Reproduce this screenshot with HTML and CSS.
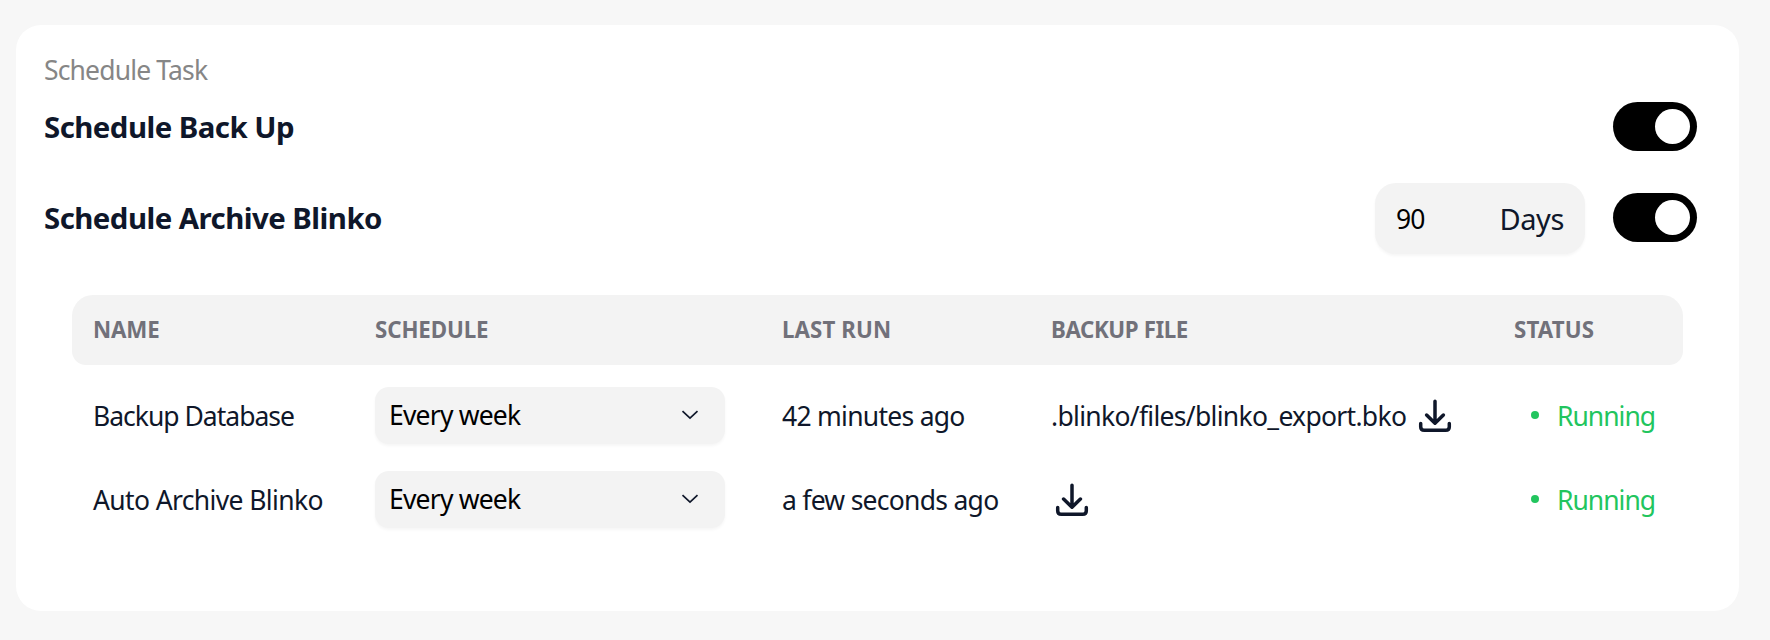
FILE: index.html
```html
<!DOCTYPE html>
<html lang="en">
<head>
<meta charset="utf-8">
<title>Schedule Task</title>
<link rel="stylesheet" href="styles.css">
</head>
<body>
<svg class="defs" width="0" height="0" aria-hidden="true">
  <symbol id="download" viewBox="0 0 42 42">
    <path d="M21 6.300v21.500M12.600 20l8.400 8.200L29.400 20M6.700 28.500v3.200q0 3.600 3.600 3.600h21.400q3.600 0 3.600-3.600v-3.200" fill="none" stroke="currentColor" stroke-width="3.500" stroke-linecap="round" stroke-linejoin="round"/>
  </symbol>
  <symbol id="chevron" viewBox="0 0 18 10">
    <path d="M1.500 1.200l7.500 7 7.500-7" fill="none" stroke="currentColor" stroke-width="1.700"/>
  </symbol>
</svg>
<main class="card">
  <p class="caption">Schedule Task</p>
  <div class="setting setting-backup">
    <h2 class="setting-title">Schedule Back Up</h2>
    <button class="switch" role="switch" aria-checked="true" aria-label="Schedule Back Up"><span class="knob"></span></button>
  </div>
  <div class="setting setting-archive">
    <h2 class="setting-title">Schedule Archive Blinko</h2>
    <div class="controls">
      <div class="days"><span class="days-value">90</span><span class="days-unit">Days</span></div>
      <button class="switch" role="switch" aria-checked="true" aria-label="Schedule Archive Blinko"><span class="knob"></span></button>
    </div>
  </div>
  <section class="table">
    <div class="row head">
      <span>NAME</span><span>SCHEDULE</span><span class="head-last">LAST RUN</span><span class="head-file">BACKUP FILE</span><span class="head-status">STATUS</span>
    </div>
    <div class="row">
      <span class="name-db">Backup Database</span>
      <div class="select"><span>Every week</span><svg class="chevron"><use href="#chevron"/></svg></div>
      <span class="last-run">42 minutes ago</span>
      <div class="file"><span>.blinko/files/blinko_export.bko</span><svg class="download"><use href="#download"/></svg></div>
      <div class="status"><i class="dot"></i><span>Running</span></div>
    </div>
    <div class="row">
      <span class="name-archive">Auto Archive Blinko</span>
      <div class="select"><span>Every week</span><svg class="chevron"><use href="#chevron"/></svg></div>
      <span class="last-run">a few seconds ago</span>
      <div class="file"><svg class="download"><use href="#download"/></svg></div>
      <div class="status"><i class="dot"></i><span>Running</span></div>
    </div>
  </section>
</main>
</body>
</html>
```
FILE: styles.css
```css
* { box-sizing: border-box; }
body {
  margin: 0;
  height: 640px;
  padding: 25px 31px 29px 16px;
  background: #f7f7f7;
  color: #0f172a;
  font: 26.5px/40px "Noto Sans", "Open Sans", sans-serif;
  white-space: nowrap;
}
.defs { display: block; position: absolute; }
.card { height: 586px; padding: 25px 42px 0 28px; border-radius: 25px; background: #fff; }
.caption { margin: 0; color: #868686; letter-spacing: -.85px; }
.setting { display: flex; align-items: center; justify-content: space-between; }
.setting-backup { height: 73px; }
.setting-archive { height: 111px; }
.setting-title { margin: 0; font-size: 29.4px; font-weight: 700; letter-spacing: -.54px; }
.setting-archive .setting-title { margin-bottom: 2px; }
.controls { display: flex; align-items: center; gap: 28px; }
.switch { display: flex; align-items: center; justify-content: flex-end; width: 84px; height: 49px; padding: 0 7px; border: 0; border-radius: 25px; background: #000; }
.controls .switch { margin-bottom: 2px; }
.knob { width: 35px; height: 35px; border-radius: 50%; background: #fff; }
.days { display: flex; align-items: center; justify-content: space-between; width: 210px; height: 71px; padding: 0 21px; border-radius: 21px; background: #f3f3f3; box-shadow: 0 2px 3px rgba(0,0,0,.04); }
.days-value { color: #000; letter-spacing: -.8px; }
.days-unit { font-size: 29px; letter-spacing: -.4px; }
.table { margin: 21px 14px 0 28px; }
.row { display: grid; grid-template-columns: 282px 407px 269px 463px 1fr; align-items: center; height: 84px; padding: 1px 21px 0; }
.head { height: 70px; margin-bottom: 8px; padding: 0 21px; border-radius: 21px 21px 14px 14px; background: #f3f3f3; color: #71717a; font-size: 22.3px; font-weight: 700; letter-spacing: -.1px; }
.head-last { letter-spacing: .1px; }
.head-file { letter-spacing: -.4px; }
.head-status { letter-spacing: .1px; }
.name-db { letter-spacing: -1px; }
.name-archive { letter-spacing: -.63px; }
.last-run { letter-spacing: -.73px; }
.select { display: flex; align-items: center; justify-content: space-between; width: 350px; height: 57px; margin-bottom: 1px; padding: 0 26px 0 14px; border-radius: 14px; background: #f3f3f3; color: #000; box-shadow: 0 2px 3px rgba(0,0,0,.04); letter-spacing: -.8px; }
.chevron { width: 18px; height: 10px; color: #0f172a; }
.file { display: flex; align-items: center; gap: 8px; padding-top: 1px; letter-spacing: -.7px; }
.download { flex: none; width: 42px; height: 42px; }
.status { display: flex; align-items: center; gap: 18px; padding-left: 17px; color: #22c55e; letter-spacing: -1px; }
.dot { width: 8px; height: 8px; margin-bottom: 1px; border-radius: 50%; background: currentColor; }
```
